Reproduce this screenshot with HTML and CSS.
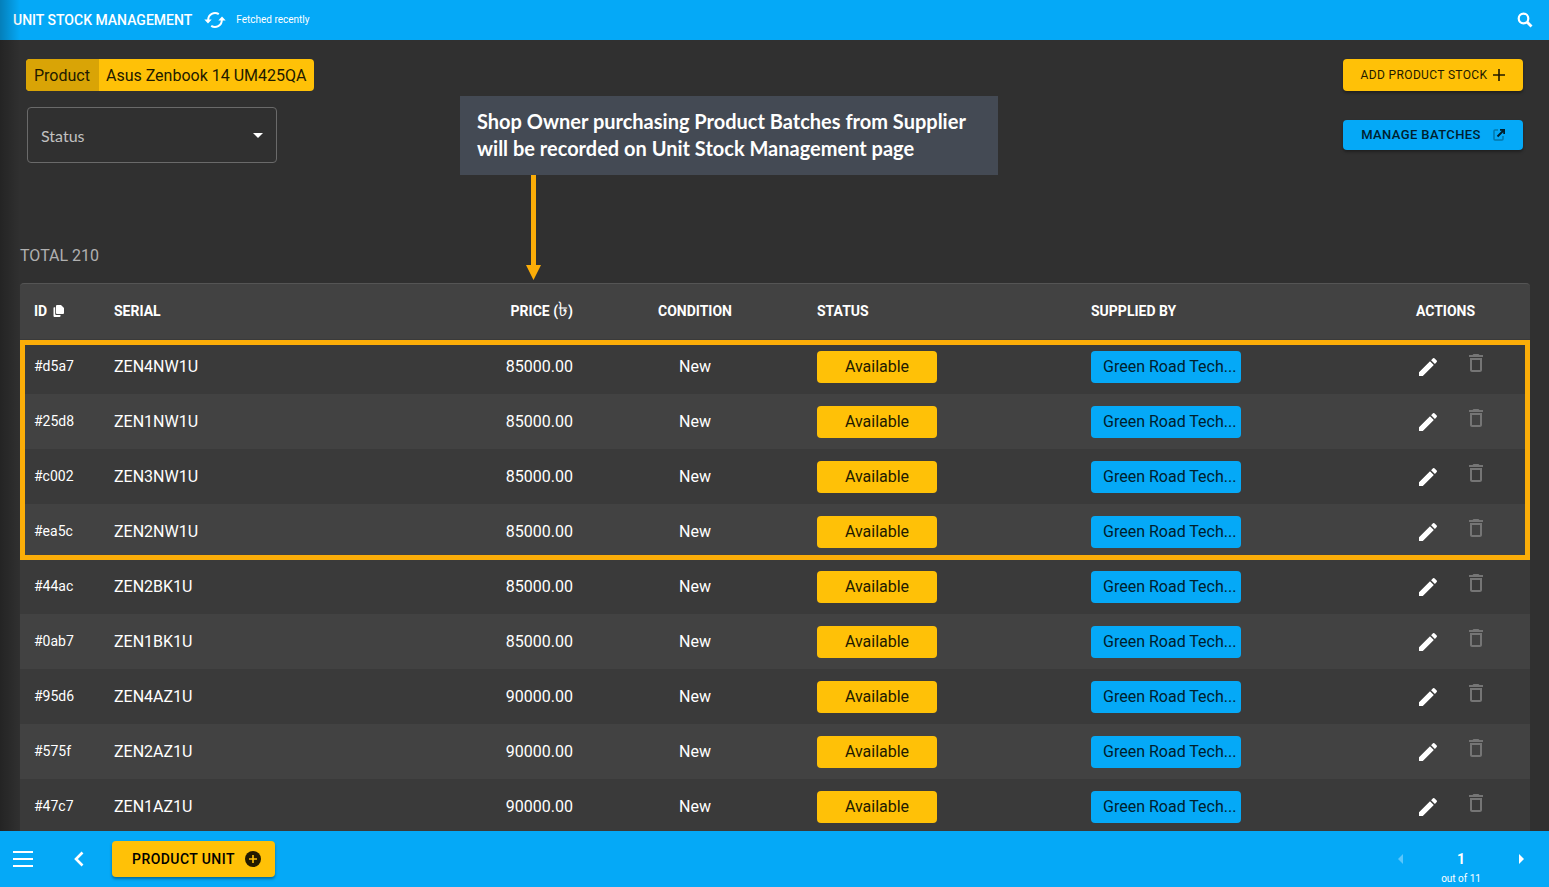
FILE: index.html
```html
<!DOCTYPE html>
<html lang="en">
<head>
<meta charset="utf-8">
<title>Unit Stock Management</title>
<link rel="stylesheet" href="styles.css">
</head>
<body>
<svg class="sprite" aria-hidden="true">
  <symbol id="pencil" viewBox="0 0 24 24"><path d="M3 17.2V21h3.800L17.800 9.900 14 6.200 3 17.200zM20.700 7a1 1 0 0 0 0-1.400l-2.300-2.300a1 1 0 0 0-1.400 0l-1.900 1.900L18.900 8.900 20.700 7z"/></symbol>
  <symbol id="trash" viewBox="0 0 24 24"><path d="M6 19c0 1.100.9 2 2 2h8c1.100 0 2-.9 2-2V7H6v12zM8 9h8v10H8V9zm7.500-5-1-1h-5l-1 1H5v2h14V4h-3.500z"/></symbol>
</svg>

<header class="topbar">
  <h1 class="topbar-title">UNIT STOCK MANAGEMENT</h1>
  <button class="icon-button" aria-label="Refresh">
    <svg width="22" height="18" viewBox="0 0 22 18" fill="none" stroke="#fff" stroke-width="2"><path d="M4.200 9A6.800 6.800 0 0 1 14.800 3.200M17.800 9A6.800 6.800 0 0 1 7.200 14.800"/><path d="M.3 8.500h7.400L4 12.500zM14.300 9.500h7.400L18 5.500z" fill="#fff" stroke="none"/></svg>
  </button>
  <span class="topbar-note">Fetched recently</span>
  <button class="icon-button search" aria-label="Search">
    <svg width="16" height="16" viewBox="0 0 16 16" fill="none" stroke="#fff"><circle cx="6.500" cy="6.500" r="4.800" stroke-width="2.200"/><path d="M10 10l4.500 4.500" stroke-width="2.800"/></svg>
  </button>
</header>

<main class="page">
  <section class="toolbar">
    <div class="filters">
      <div class="chip"><span class="chip-key">Product</span><span class="chip-value">Asus Zenbook 14 UM425QA</span></div>
      <div class="field">
        <select class="select" aria-label="Status"><option>Status</option><option>Available</option></select>
        <svg class="select-arrow" width="10" height="5" viewBox="0 0 10 5"><path d="M0 0h10L5 5z" fill="#fff"/></svg>
      </div>
    </div>
    <div class="commands">
      <button class="button button-add">ADD PRODUCT STOCK
        <svg width="12" height="12" viewBox="0 0 12 12" stroke="#221a00" stroke-width="1.600"><path d="M6 0v12M0 6h12"/></svg>
      </button>
      <button class="button button-batches">MANAGE BATCHES
        <svg width="12" height="12" viewBox="0 0 12 12" fill="none"><path d="M5 1H2Q1 1 1 2v8q0 1 1 1h7q1 0 1-1V7" stroke="#0277ab" stroke-width="1.500"/><path d="M7 .8h4.200V5M11 1 4.500 7.500" stroke="#00202e" stroke-width="1.900"/></svg>
      </button>
    </div>
    <aside class="callout">
      Shop Owner purchasing Product Batches from Supplier<br>will be recorded on Unit Stock Management page
      <svg class="callout-arrow" width="15" height="105" viewBox="0 0 15 105" fill="#fbad08"><path d="M5 0h5v90h5L7.500 105 0 90h5z"/></svg>
    </aside>
  </section>

  <p class="total">TOTAL 210</p>

  <div class="table-wrap">
    <table class="stock">
      <colgroup><col class="col-id"><col><col class="col-price"><col class="col-condition"><col class="col-status"><col class="col-supplier"><col class="col-actions"></colgroup>
      <thead>
        <tr>
          <th>ID <svg class="copy" width="11" height="12" viewBox="0 0 11 12"><path d="M4 0h4l3 3v5q0 1-1 1H4Q3 9 3 8V1q0-1 1-1z" fill="#fff"/><path d="M.5 3q0-.7.700-.7h1v6.700q0 1 1 1h4.300v1q0 1-1 1h-5q-1 0-1-1z" fill="#fff"/></svg></th>
          <th>SERIAL</th><th class="right">PRICE (<span class="taka">৳</span>)</th><th class="center">CONDITION</th><th>STATUS</th><th>SUPPLIED BY</th><th class="center">ACTIONS</th>
        </tr>
      </thead>
      <tbody id="rows"></tbody>
    </table>
    <div class="highlight"></div>
  </div>
</main>

<footer class="bottombar">
  <button class="icon-button menu" aria-label="Menu">
    <svg width="20" height="16" viewBox="0 0 20 16" stroke="#fff" stroke-width="2"><path d="M0 1h20M0 8h20M0 15h20"/></svg>
  </button>
  <button class="icon-button back" aria-label="Back">
    <svg width="10" height="16" viewBox="0 0 10 16" fill="none" stroke="#fff" stroke-width="2.600"><path d="M8.500 1.500 2 8l6.500 6.500"/></svg>
  </button>
  <button class="button button-unit">PRODUCT UNIT
    <svg width="16" height="16" viewBox="0 0 16 16"><circle cx="8" cy="8" r="8" fill="#221a00"/><path d="M8 4v8M4 8h8" stroke="#ffc107" stroke-width="1.600"/></svg>
  </button>
  <nav class="pager" aria-label="Pages">
    <button class="icon-button" aria-label="Previous page" disabled><svg width="5" height="10" viewBox="0 0 5 10"><path d="M5 0v10L0 5z" fill="#5bc6fb"/></svg></button>
    <div class="pager-label"><strong class="pager-current">1</strong><span class="pager-total">out of 11</span></div>
    <button class="icon-button" aria-label="Next page"><svg width="5" height="10" viewBox="0 0 5 10"><path d="M0 0v10l5-5z" fill="#fff"/></svg></button>
  </nav>
</footer>
<div class="edge-shade"></div>
<script src="app.js"></script>
</body>
</html>
```
FILE: styles.css
```css
* { box-sizing: border-box; }
body {
  margin: 0;
  height: 100vh;
  display: flex;
  flex-direction: column;
  background: #303030;
  color: #fff;
  font: 16px/24px Roboto, "Liberation Sans", sans-serif;
}
button, select { font: inherit; color: inherit; }
svg { display: block; flex: none; }
.sprite { position: absolute; width: 0; height: 0; }

.icon-button { display: flex; padding: 0; border: 0; background: none; cursor: pointer; }

.topbar {
  flex: none;
  display: flex;
  align-items: center;
  height: 40px;
  padding: 0 16px 0 13px;
  background: #05a9f7;
}
.topbar-title { margin: 0 12px 0 0; font-size: 14px; font-weight: 500; }
.topbar-note { margin-left: 10px; font-size: 10px; }
.search { margin-left: auto; }

.page { flex: 1; min-height: 0; overflow: hidden; padding: 19px 19px 0 20px; }

.toolbar { position: relative; display: flex; justify-content: space-between; padding: 0 7px 0 6px; }
.chip { display: flex; width: max-content; height: 32px; border-radius: 4px; overflow: hidden; background: #ffc107; color: #221a00; line-height: 34px; }
.chip-key { padding: 0 9px 0 8px; background: #d9a406; }
.chip-value { padding: 0 8px 0 7px; }
.field { position: relative; width: 250px; margin: 16px 1px 0; }
.select {
  appearance: none;
  display: block;
  width: 100%;
  height: 56px;
  padding: 2px 32px 0 13px;
  border: 1px solid #6a6a6a;
  border-radius: 4px;
  background: transparent;
  color: #c1c1c1;
  font-family: Lato, sans-serif;
}
.select-arrow { position: absolute; right: 14px; top: 26px; pointer-events: none; }

.commands { display: flex; flex-direction: column; width: 180px; }
.button {
  display: flex;
  align-items: center;
  justify-content: center;
  gap: 6px;
  padding: 0;
  border: 0;
  border-radius: 4px;
  background: #ffc107;
  color: #221a00;
  letter-spacing: .03em;
  box-shadow: 0 2px 3px rgba(0, 0, 0, .35);
  cursor: pointer;
}
.button-add { height: 32px; font-size: 12px; }
.button-batches { height: 30px; margin-top: 29px; gap: 12px; background: #05a9f7; color: #00202e; font-size: 13px; font-weight: 500; }

.callout {
  position: absolute;
  left: 440px;
  top: 37px;
  width: 538px;
  padding: 12px 16px 13px 17px;
  background: #444a54;
  font: 700 20px/27px Lato, sans-serif;
  white-space: nowrap;
}
.callout-arrow { position: absolute; left: 66px; top: 100%; }

.total { margin: 81px 0 15px; color: #b0b0b0; }

.table-wrap { position: relative; border-top: 1px solid #555; border-radius: 4px 4px 0 0; overflow: hidden; background: #424242; }
.stock { width: 100%; table-layout: fixed; border-collapse: collapse; }
.col-id { width: 80px; }
.col-price { width: 187px; }
.col-condition { width: 216px; }
.col-status { width: 274px; }
.col-supplier { width: 284px; }
.col-actions { width: 169px; }
.stock th { height: 55px; padding: 0 14px 2px; font-size: 14px; font-weight: 700; text-align: left; white-space: nowrap; }
.stock td { height: 55px; padding: 0 14px; }
.stock .right { text-align: right; }
.stock .center { text-align: center; }
.stock tbody tr:nth-child(odd) { background: #3a3a3a; }
.stock .cell-id { padding-bottom: 2px; font-size: 14px; }
.copy { display: inline-block; margin-left: 2px; vertical-align: -1px; }
.taka { font-size: 20px; line-height: 16px; font-weight: 400; }
.badge { display: block; height: 32px; border-radius: 4px; line-height: 32px; text-align: center; }
.badge-status { width: 120px; background: #ffc107; color: #221a00; }
.badge-supplier { width: 150px; padding: 0 2px 0 12px; background: #05a9f7; color: #00202e; white-space: nowrap; overflow: hidden; text-overflow: ellipsis; text-align: left; }
.actions { display: flex; align-items: center; justify-content: center; gap: 24px; padding-left: 12px; }
.actions svg { width: 24px; height: 24px; fill: #fff; }
.actions .delete svg { fill: #757575; }
.actions .delete { padding-bottom: 8px; }
.highlight { position: absolute; inset: 56px 0 auto; height: 220px; border: 5px solid #fbad08; pointer-events: none; }

.bottombar { flex: none; display: flex; align-items: center; height: 56px; padding: 0 25px 0 13px; background: #05a9f7; }
.back { margin: 0 28px 0 41px; }
.button-unit { width: 163px; height: 36px; padding-left: 6px; gap: 10px; font-size: 14px; font-weight: 500; color: #000; }
.pager { display: flex; align-items: center; gap: 38px; margin-left: auto; }
.pager-label { display: flex; flex-direction: column; align-items: center; padding-top: 12px; }
.pager-current { font-size: 14px; line-height: 28px; font-weight: 700; }
.pager-total { font-size: 10px; line-height: 12px; }

.edge-shade { position: absolute; inset: 0 auto 56px 0; width: 20px; background: linear-gradient(to right, rgba(0, 0, 0, .25), transparent); pointer-events: none; }
```
FILE: app.js
```js
const units = [
  ["#d5a7", "ZEN4NW1U", "85000.00"],
  ["#25d8", "ZEN1NW1U", "85000.00"],
  ["#c002", "ZEN3NW1U", "85000.00"],
  ["#ea5c", "ZEN2NW1U", "85000.00"],
  ["#44ac", "ZEN2BK1U", "85000.00"],
  ["#0ab7", "ZEN1BK1U", "85000.00"],
  ["#95d6", "ZEN4AZ1U", "90000.00"],
  ["#575f", "ZEN2AZ1U", "90000.00"],
  ["#47c7", "ZEN1AZ1U", "90000.00"]
];

document.getElementById("rows").innerHTML = units.map(([id, serial, price]) => `
  <tr>
    <td class="cell-id">${id}</td>
    <td>${serial}</td>
    <td class="right">${price}</td>
    <td class="center">New</td>
    <td><span class="badge badge-status">Available</span></td>
    <td><span class="badge badge-supplier">Green Road Tech...</span></td>
    <td><div class="actions">
      <button class="icon-button" aria-label="Edit ${serial}"><svg><use href="#pencil"/></svg></button>
      <button class="icon-button delete" aria-label="Delete ${serial}"><svg><use href="#trash"/></svg></button>
    </div></td>
  </tr>`).join("");
```
